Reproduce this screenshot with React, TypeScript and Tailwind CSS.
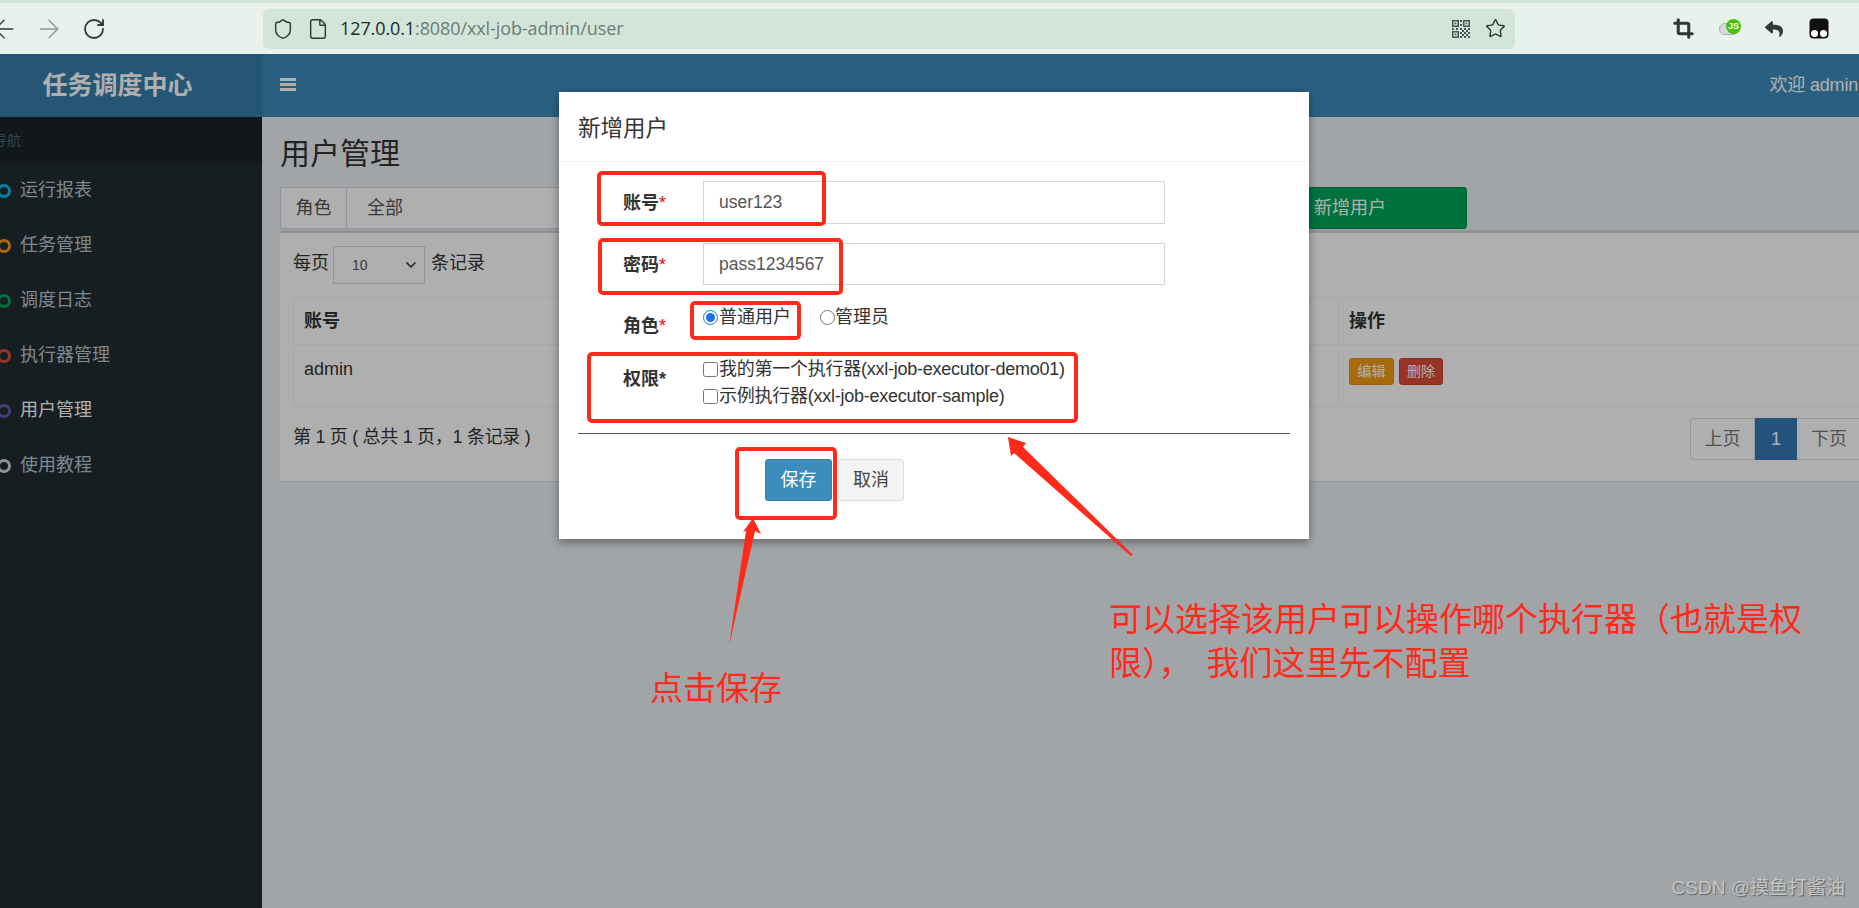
import React from 'react';
import { ArrowLeft, ArrowRight, RotateCw, Shield, File, Star, Crop, Menu, ChevronDown } from 'lucide-react';
import { FaReply } from 'react-icons/fa';

const MENU = [
  { label: '运行报表', ring: 'border-[#00c0ef]' },
  { label: '任务管理', ring: 'border-[#f39c12]' },
  { label: '调度日志', ring: 'border-[#00a65a]' },
  { label: '执行器管理', ring: 'border-[#dd4b39]' },
  { label: '用户管理', ring: 'border-[#605ca8]', active: true },
  { label: '使用教程', ring: 'border-[#d2d6de]' },
];

const QrIcon = () => (
  <svg width="18" height="18" viewBox="0 0 18 18" fill="#4a5450" className="shrink-0 ml-auto">
    <path fillRule="evenodd" d="M0 0h7v7H0zM1.5 1.5v4h4v-4zM11 0h7v7h-7zM12.500 1.500v4h4v-4zM0 11h7v7H0zM1.500 12.500v4h4v-4z" />
    <rect x="2.700" y="2.700" width="1.600" height="1.600" />
    <rect x="13.700" y="2.700" width="1.600" height="1.600" />
    <rect x="2.700" y="13.700" width="1.600" height="1.600" />
    <path d="M8 0h2v2H8zM8 4h2v2H8zM0 8h2v2H0zM4 8h2v2H4zM8 8h2v2H8zM12 8h2v2h-2zM16 8h2v2h-2zM10 10h2v2h-2zM14 10h2v2h-2zM8 12h2v2H8zM12 12h2v2h-2zM16 12h2v2h-2zM10 14h2v2h-2zM14 14h2v2h-2zM8 16h2v2H8zM12 16h2v2h-2zM16 16h2v2h-2z" />
  </svg>
);

const BrowserBar = () => (
  <div className="h-[54px] shrink-0 bg-[#e8f1ec] border-t-[3px] border-[#d3e4db] flex items-center relative text-[#2f3a35]">
    <ArrowLeft size={30} strokeWidth={1.1} className="shrink-0 ml-[-11px]" />
    <ArrowRight size={30} strokeWidth={1.1} className="shrink-0 ml-[15px] text-[#8d9691]" />
    <RotateCw size={24} strokeWidth={1.8} className="shrink-0 ml-[18px]" />
    <div className="shrink-0 ml-[157px] w-[1252px] h-[40px] rounded-[6px] bg-[#d3e4db] flex items-center pl-[9px] pr-[9px]">
      <Shield size={22} strokeWidth={1.6} className="shrink-0" />
      <File size={22} strokeWidth={1.6} className="shrink-0 ml-[13px]" />
      <span className="ml-[11px] text-[18px] tracking-[-0.1px] text-[#6e7c74] [font-family:'Open_Sans',sans-serif]">
        <span className="text-[#1f2b25]">127.0.0.1</span>:8080/xxl-job-admin/user
      </span>
      <QrIcon />
      <Star size={21} strokeWidth={1.6} className="shrink-0 ml-[15px]" />
    </div>
    <Crop size={21} strokeWidth={3.5} className="shrink-0 ml-[158px]" />
    <div className="shrink-0 ml-[25px] relative w-[20px] h-[12px] rounded-full bg-[#d7dbd9] border border-[#a9b0ac]">
      <span className="absolute right-[-3px] top-[-5px] w-[15px] h-[15px] rounded-full bg-[#46c10a] text-white text-[9px] font-bold leading-[15px] text-center">JS</span>
    </div>
    <FaReply size={18} className="shrink-0 ml-[26px]" />
    <svg width="20" height="21" viewBox="0 0 20 21" className="shrink-0 ml-[26px]">
      <rect x="0.500" y="0.500" width="19" height="20" rx="4" fill="#111" />
      <circle cx="5.500" cy="15.500" r="3.500" fill="#fff" />
      <circle cx="14.500" cy="15.500" r="3.500" fill="#fff" />
    </svg>
    <Menu size={18} className="shrink-0 ml-[28px]" />
  </div>
);

const Sidebar = () => (
  <aside className="w-[262px] shrink-0 bg-[#222d32] flex flex-col">
    <div className="h-[63px] bg-[#367fa9] flex items-center justify-center pr-[27px] text-white text-[25px] font-bold">
      任务调度中心
    </div>
    <div className="h-[46px] bg-[#1a2226] text-[#4b646f] text-[14px] flex items-center">
      <span className="ml-[-7px]">导航</span>
    </div>
    {MENU.map((item) => (
      <div key={item.label} className={`h-[55px] flex items-center text-[18px] ${item.active ? 'text-white' : 'text-[#b8c7ce]'}`}>
        <span className={`ml-[-3px] w-[14px] h-[14px] rounded-full border-[3px] ${item.ring}`}></span>
        <span className="ml-[9px]">{item.label}</span>
      </div>
    ))}
  </aside>
);

const Content = () => (
  <main className="flex-1 min-w-0 bg-[#ecf0f5] flex flex-col overflow-hidden">
    <div className="h-[63px] shrink-0 bg-[#3c8dbc] flex items-center pl-[18px] pr-[1px] text-white">
      <svg width="16" height="13" viewBox="0 0 16 13" fill="currentColor" className="mb-[2px]">
        <rect width="16" height="3" />
        <rect y="5" width="16" height="3" />
        <rect y="10" width="16" height="3" />
      </svg>
      <span className="ml-auto text-[18px] tracking-[-0.2px]">欢迎 admin</span>
    </div>

    <div className="w-[1613px] pl-[18px] pt-[17px]">
      <h1 className="text-[30px] leading-[40px] text-[#333]">用户管理</h1>

      <div className="mt-[13px] h-[42px] flex text-[18px] text-[#555]">
        <div className="w-[67px] bg-white border border-[#d2d6de] flex items-center justify-center">角色</div>
        <div className="w-[400px] bg-white border border-l-0 border-[#d2d6de] flex items-center pl-[20px]">全部</div>
        <button className="ml-[486px] w-[234px] bg-[#00a65a] border border-[#008d4c] rounded-[3px] text-white text-[18px]">新增用户</button>
      </div>

      <section className="mt-px h-[251px] bg-white border-t-[3px] border-[#d2d6de] rounded-[3px] shadow-[0_1px_1px_rgba(0,0,0,0.1)] px-[13px] text-[#333] text-[18px]">
        <div className="pt-[13px] h-[64px] flex items-start">
          <span className="w-[40px] leading-[34px]">每页</span>
          <div className="w-[92px] h-[38px] border border-[#d2d6de] flex items-center justify-between pl-[18px] pr-[5px] text-[#555] text-[14px]">
            10
            <ChevronDown size={16} strokeWidth={2.5} className="text-[#333]" />
          </div>
          <span className="ml-[6px] leading-[34px]">条记录</span>
        </div>

        <table className="w-full table-fixed border-collapse border border-[#f4f4f4]">
          <colgroup>
            <col className="w-[500px]" />
            <col className="w-[545px]" />
            <col />
          </colgroup>
          <thead>
            <tr className="h-[47px] text-left border-b-[2px] border-[#f4f4f4]">
              <th className="pl-[10px] pt-[2px] font-bold">账号</th>
              <th className="pl-[10px] pt-[2px] font-bold">角色</th>
              <th className="pl-[10px] pt-[2px] font-bold border-l border-[#f4f4f4]">操作</th>
            </tr>
          </thead>
          <tbody>
            <tr className="h-[62px] align-top">
              <td className="pl-[10px] pt-[10px] leading-[26px]">admin</td>
              <td className="pl-[10px] pt-[10px] leading-[26px]">管理员</td>
              <td className="pl-[10px] pt-[12px] border-l border-[#f4f4f4]">
                <div className="flex gap-[5px] text-white text-[14px]">
                  <span className="w-[45px] h-[27px] rounded-[3px] bg-[#f39c12] border border-[#e08e0b] flex items-center justify-center">编辑</span>
                  <span className="w-[44px] h-[27px] rounded-[3px] bg-[#dd4b39] border border-[#d73925] flex items-center justify-center">删除</span>
                </div>
              </td>
            </tr>
          </tbody>
        </table>

        <div className="mt-[11px] flex items-start justify-between">
          <span className="mt-[6px] leading-[26px] tracking-[-0.3px]">第 1 页 ( 总共 1 页，1 条记录 )</span>
          <div className="flex h-[42px] items-stretch">
            <span className="w-[65px] border border-[#ddd] rounded-l-[4px] flex items-center justify-center text-[#777]">上页</span>
            <span className="w-[42px] bg-[#337ab7] text-white flex items-center justify-center">1</span>
            <span className="w-[65px] border border-l-0 border-[#ddd] flex items-center justify-center text-[#777]">下页</span>
          </div>
        </div>
      </section>
    </div>
  </main>
);

const Required = () => <span className="text-[#f00] font-normal">*</span>;

const Modal = () => (
  <div className="absolute left-[559px] top-[92px] w-[750px] h-[447px] bg-white shadow-[0_3px_9px_rgba(0,0,0,0.4)] text-[18px] text-[#333]">
    <div className="h-[70px] border-b border-[#f4f4f4] flex items-center pl-[19px] pt-[4px] text-[22.500px]">新增用户</div>
    <form className="px-[19px] pt-[19px]">
      <div className="grid grid-cols-[125px_1fr] items-center h-[43px]">
        <label className="pl-[45px] pt-[2px] font-bold">账号<Required /></label>
        <input readOnly value="user123" className="w-[462px] h-full border border-[#d2d6de] px-[15px] text-[17.500px] text-[#555] outline-none" />
      </div>
      <div className="grid grid-cols-[125px_1fr] items-center h-[42px] mt-[19px]">
        <label className="pl-[45px] pt-[2px] font-bold">密码<Required /></label>
        <input readOnly value="pass1234567" className="w-[462px] h-full border border-[#d2d6de] px-[15px] text-[17.500px] text-[#555] outline-none" />
      </div>
      <div className="grid grid-cols-[125px_1fr] mt-[20px]">
        <label className="pl-[45px] font-bold pt-[8px]">角色<Required /></label>
        <div className="flex items-center h-[24px]">
          <input type="radio" name="role" defaultChecked className="w-[15px] h-[15px] m-0 accent-[#1a73e8]" />
          <span className="ml-[1px]">普通用户</span>
          <input type="radio" name="role" className="w-[15px] h-[15px] m-0 ml-[29px]" />
          <span>管理员</span>
        </div>
      </div>
      <div className="grid grid-cols-[125px_1fr] mt-[16px]">
        <label className="pl-[45px] font-bold pt-[10px]">权限*</label>
        <div>
          <div className="flex items-center h-[27px]">
            <input type="checkbox" className="w-[15px] h-[15px] m-0" />
            <span className="ml-[1px] tracking-[-0.25px]">我的第一个执行器(xxl-job-executor-demo01)</span>
          </div>
          <div className="flex items-center h-[27px]">
            <input type="checkbox" className="w-[15px] h-[15px] m-0" />
            <span className="ml-[1px] tracking-[-0.25px]">示例执行器(xxl-job-executor-sample)</span>
          </div>
        </div>
      </div>
      <hr className="mt-[23px] border-t border-[#555]" />
      <div className="mt-[25px] ml-[187px] flex gap-[6px]">
        <button type="button" className="w-[67px] h-[42px] rounded-[3px] bg-[#3c8dbc] border border-[#367fa9] text-white">保存</button>
        <button type="button" className="w-[66px] h-[42px] rounded-[3px] bg-[#f4f4f4] border border-[#ddd] text-[#444]">取消</button>
      </div>
    </form>
  </div>
);

// hand drawn marks on top of the screenshot
const Annotations = () => (
  <>
    <div className="absolute left-[597px] top-[171px] w-[229px] h-[55px] border-[4px] border-[#ff2a1a] rounded-[5px]"></div>
    <div className="absolute left-[598px] top-[238px] w-[245px] h-[57px] border-[4px] border-[#ff2a1a] rounded-[5px]"></div>
    <div className="absolute left-[690px] top-[301px] w-[111px] h-[39px] border-[4px] border-[#ff2a1a] rounded-[5px]"></div>
    <div className="absolute left-[587px] top-[352px] w-[491px] h-[71px] border-[4px] border-[#ff2a1a] rounded-[5px]"></div>
    <div className="absolute left-[735px] top-[447px] w-[102px] h-[73px] border-[4px] border-[#ff2a1a] rounded-[5px]"></div>
    <svg width="1859" height="908" className="absolute left-0 top-0 pointer-events-none">
      <polygon points="753,518 761,534 755,531 729,646 746,531 743,532" fill="#ff2a1a" />
      <polygon points="1008,437 1026,443 1023,447 1133,555 1131,556 1014,453 1011,456" fill="#ff2a1a" />
    </svg>
    <div className="absolute left-[650px] top-[667px] text-[33px] leading-[44px] text-[#ff2a1a]">点击保存</div>
    <div className="absolute left-[1109px] top-[598px] w-[700px] text-[33px] leading-[44px] text-[#ff2a1a]">
      可以选择该用户可以操作哪个执行器（也就是权限），<span className="ml-[15px]">我们这里先不配置</span>
    </div>
    <div className="absolute right-[14px] top-[878px] text-[19px] leading-[20px] text-[#c4c6c7] [text-shadow:1px_1px_1px_rgba(0,0,0,0.4)]">CSDN @摸鱼打酱油</div>
  </>
);

export default function App() {
  return (
    <div className="relative w-[1859px] h-[908px] overflow-hidden flex flex-col [font-family:'Liberation_Sans','Noto_Sans_CJK_SC',sans-serif]">
      <BrowserBar />
      <div className="flex-1 flex min-h-0">
        <Sidebar />
        <Content />
      </div>
      {/* modal backdrop */}
      <div className="absolute left-0 right-0 top-[54px] bottom-0 bg-black/[0.314]"></div>
      <Modal />
      <Annotations />
    </div>
  );
}
